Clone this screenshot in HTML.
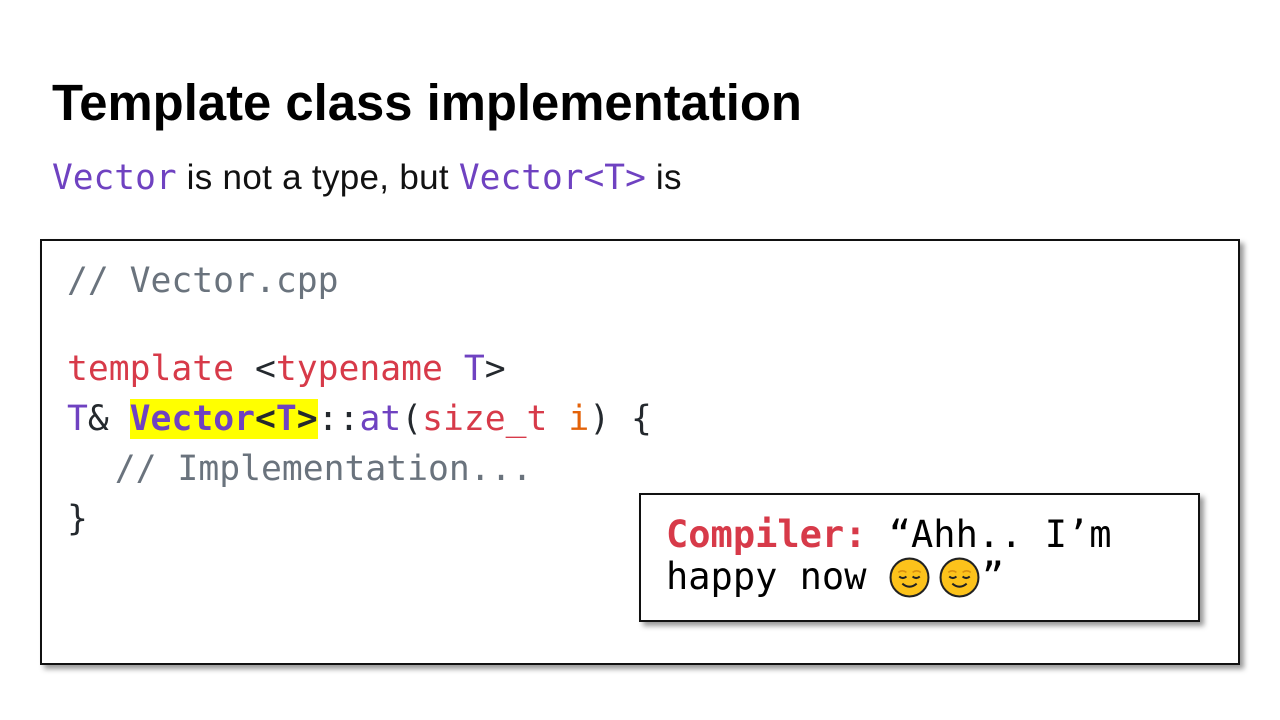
<!DOCTYPE html>
<html><head><style>
body{margin:0;width:1280px;height:720px;background:#fff;position:relative;overflow:hidden;font-family:"Liberation Sans",sans-serif}
.t{position:absolute;left:52px;top:73px;font-size:50.8px;font-weight:bold;color:#000}
.s{position:absolute;left:52px;top:158px;font-size:35px;color:#111;letter-spacing:0.3px}
.m{font-family:"DejaVu Sans Mono",monospace;color:#6f42c1;font-size:34.5px;letter-spacing:0}
.box{position:absolute;left:40px;top:239px;width:1196px;height:422px;border:2px solid #111;box-shadow:4px 4px 5px #999;background:#fff}
.code{position:absolute;left:67px;font-family:"DejaVu Sans Mono",monospace;font-size:34.7px;color:#24292e;white-space:pre;line-height:50px}
.r{color:#d73a49}.p{color:#6f42c1}.g{color:#6a737d}.o{color:#e36209}
.hl{background:#ffff00;font-weight:bold}
.call{position:absolute;left:639px;top:493px;width:557px;height:125px;border:2px solid #111;box-shadow:4px 4px 5px #999;background:#fff}
.ct{position:absolute;left:666px;top:514px;font-family:"DejaVu Sans Mono",monospace;font-size:37px;line-height:42px;color:#000;white-space:pre}
.e{display:inline-block;width:41px;height:41px;vertical-align:-9px;margin-right:9px}
</style></head><body>
<div class="t">Template class implementation</div>
<div class="s"><span class="m">Vector</span> is not a type, but <span class="m">Vector&lt;T&gt;</span> is</div>
<div class="box"></div>
<div class="code g" style="top:256px">// Vector.cpp</div>
<div class="code" style="top:344px"><span class="r">template</span> &lt;<span class="r">typename</span> <span class="p">T</span>&gt;
<span class="p">T</span>&amp; <span class="hl"><span class="p">Vector</span>&lt;<span class="p">T</span>&gt;</span>::<span class="p">at</span>(<span class="r">size_t</span> <span class="o">i</span>) {
  <span class="g" style="margin-left:6px">// Implementation...</span>
}</div>
<div class="call"></div>
<div class="ct"><b class="r">Compiler:</b> “Ahh.. I’m
happy now <svg class="e" viewBox="0 0 40 40"><circle cx="20" cy="20" r="18.5" fill="#fcc21b" stroke="#222" stroke-width="2"/><path d="M9 15q4-3 8 0M23 15q4-3 8 0" stroke="#d9900f" stroke-width="1.5" fill="none"/><path d="M10 19q3.5 3 7 0M23 19q3.5 3 7 0M13 26q7 6 14 0" stroke="#222" stroke-width="2" fill="none"/></svg><svg class="e" style="margin-right:2px" viewBox="0 0 40 40"><circle cx="20" cy="20" r="18.5" fill="#fcc21b" stroke="#222" stroke-width="2"/><path d="M9 15q4-3 8 0M23 15q4-3 8 0" stroke="#d9900f" stroke-width="1.5" fill="none"/><path d="M10 19q3.5 3 7 0M23 19q3.5 3 7 0M13 26q7 6 14 0" stroke="#222" stroke-width="2" fill="none"/></svg>”</div>
</body></html>
